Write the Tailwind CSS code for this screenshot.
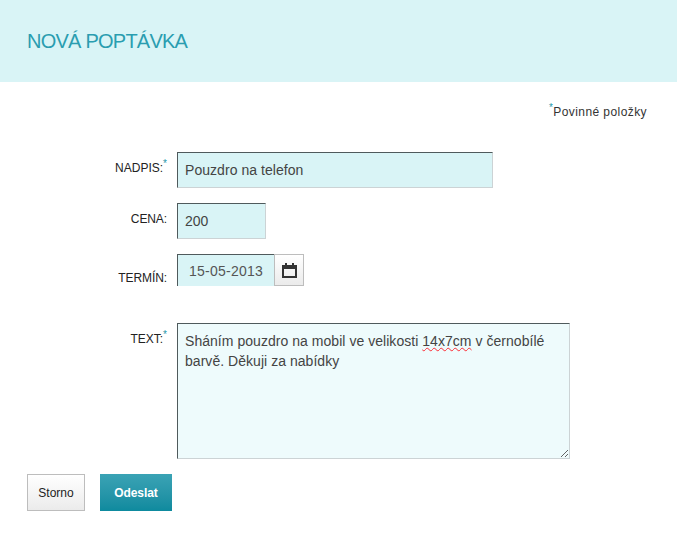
<!DOCTYPE html>
<html lang="cs">
<head>
<meta charset="utf-8">
<title>Nová poptávka</title>
<script src="https://cdn.jsdelivr.net/npm/@tailwindcss/browser@4"></script>
</head>
<body class="bg-white font-['Liberation_Sans',Arial,sans-serif] text-[#333]">
  <!-- Header -->
  <div class="h-[82px] bg-[#d9f4f6] pl-[27px] flex items-center">
    <h1 class="text-[20px] font-normal text-[#2a9db0] tracking-[-0.76px]">NOVÁ POPTÁVKA</h1>
  </div>

  <p class="mt-[20px] pr-[30px] h-[50px] text-right text-[12px] leading-[20px] text-[#333] tracking-[0.42px]"><sup class="text-[#1f97aa] text-[10px]">*</sup>Povinné položky</p>

  <!-- Form -->
  <div class="flex flex-col">
    <div class="flex">
      <label class="w-[167px] pt-[9px] text-right text-[12px] leading-[14px] text-[#222]">NADPIS:<sup class="text-[#1f97aa] text-[10px] leading-none">*</sup></label>
      <input type="text" value="Pouzdro na telefon" class="ml-[10px] w-[316px] h-[36px] px-[7px] text-[14px] text-[#444] bg-[#d9f4f6] border border-[#ccd3d5] border-t-[#4f5a5c] border-l-[#4f5a5c] outline-none tracking-[0.05px]">
    </div>
    <div class="flex mt-[15px]">
      <label class="w-[167px] pt-[9px] text-right text-[12px] leading-[14px] text-[#222] tracking-[-0.1px]">CENA:</label>
      <input type="text" value="200" class="ml-[10px] w-[89px] h-[36px] px-[7px] text-[14px] text-[#444] bg-[#d9f4f6] border border-[#ccd3d5] border-t-[#4f5a5c] border-l-[#4f5a5c] outline-none">
    </div>
    <div class="flex mt-[15px]">
      <label class="w-[167px] pt-[17px] text-right text-[12px] leading-[14px] text-[#222] tracking-[-0.1px]">TERMÍN:</label>
      <div class="ml-[10px] flex h-[32px]">
        <input type="text" value="15-05-2013" class="w-[97px] h-[32px] pl-[11px] pr-0 text-[14px] text-[#555] bg-[#d9f4f6] border-t border-l border-t-[#4f5a5c] border-l-[#4f5a5c] outline-none tracking-[0.25px]">
        <button type="button" class="w-[30px] h-[32px] flex items-center justify-center border border-[#bdbdbd] bg-gradient-to-b from-white to-[#ebebeb]">
          <svg width="15" height="15" viewBox="0 0 15 15" fill="#333">
            <path d="M0 2h3V0h2v2h5V0h2v2h3v13H0zM2 6v7h11V6z"/>
          </svg>
        </button>
      </div>
    </div>
    <div class="flex mt-[37px]">
      <label class="w-[167px] pt-[9px] text-right text-[12px] leading-[14px] text-[#222]">TEXT:<sup class="text-[#1f97aa] text-[10px] leading-none">*</sup></label>
      <div class="ml-[10px] w-[393px] h-[136px] px-[7px] pt-[7px] text-[14px] leading-[20px] text-[#444] bg-[#eefbfc] border border-[#ccd3d5] border-t-[#4f5a5c] border-l-[#4f5a5c] resize overflow-auto tracking-[0.04px]">Sháním pouzdro na mobil ve velikosti <span class="underline decoration-wavy decoration-red-500 decoration-1">14x7cm</span> v černobílé barvě. Děkuji za nabídky</div>
    </div>
  </div>

  <!-- Buttons -->
  <div class="flex gap-[15px] pl-[27px] mt-[15px]">
    <button type="button" class="w-[58px] h-[37px] text-[12px] text-[#222] border border-[#bdbdbd] bg-gradient-to-b from-white to-[#ebebeb]">Storno</button>
    <button type="button" class="w-[72px] h-[37px] text-[12px] font-bold text-white bg-gradient-to-b from-[#3aa3b5] to-[#0d8a9e] tracking-[-0.1px]">Odeslat</button>
  </div>
</body>
</html>
